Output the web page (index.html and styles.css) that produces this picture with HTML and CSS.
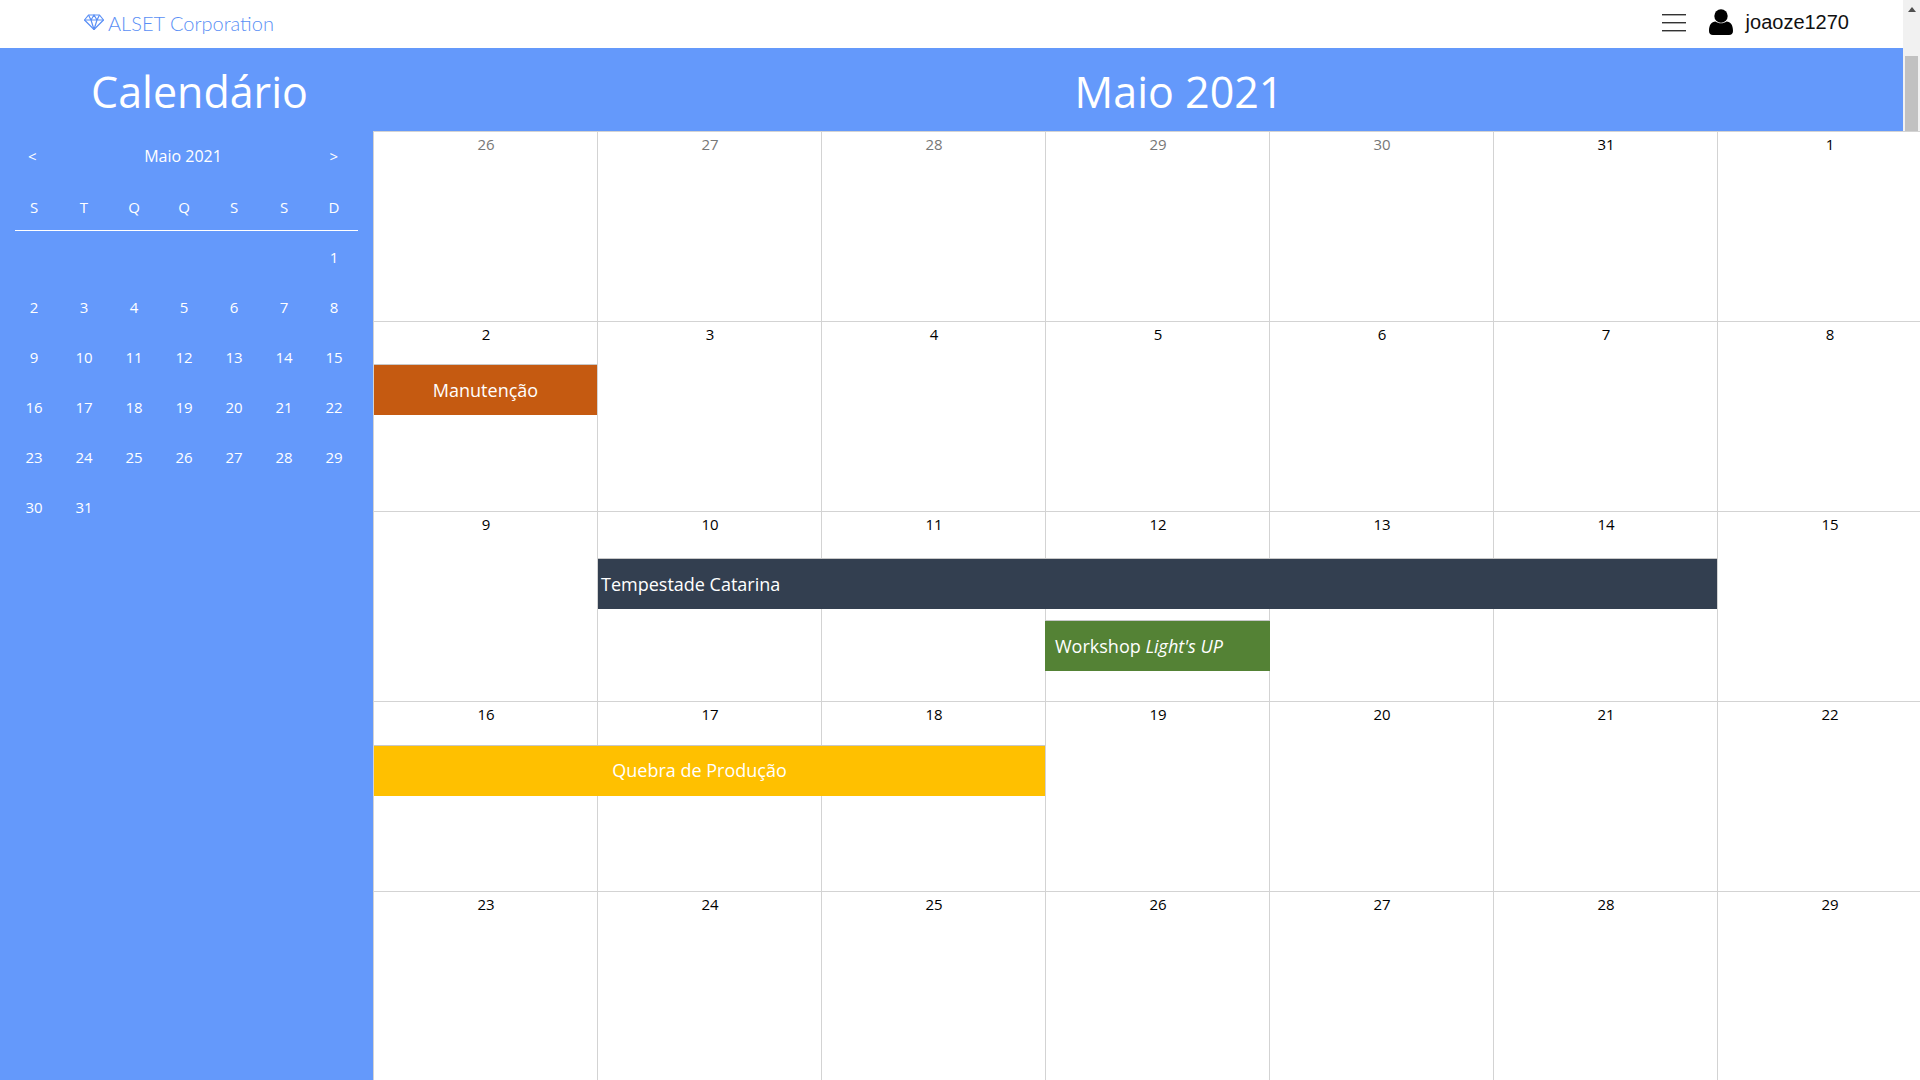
FILE: index.html
```html
<!DOCTYPE html>
<html lang="pt-BR">
  <head>
    <meta charset="UTF-8" />
    <title>Calendário</title>
    <link rel="stylesheet" href="styles.css">
  </head>
  <body>
    <nav class="navbar">
      <a class="brand">
        <svg class="brand-icon" viewBox="0 0 20 16" fill="none" stroke="currentColor" stroke-width="1.2" stroke-linejoin="round">
          <path d="M4.5 1h11l4 5-9.500 9.500L.5 6z" />
          <path d="M.5 6h19M4.500 1l2.500 5 3 9.500 3-9.500 2.500-5M7 6l3-5 3 5" />
        </svg>
        ALSET Corporation
      </a>
      <div class="nav-right">
        <div class="hamburger"><span></span><span></span><span></span></div>
        <svg class="user-icon" viewBox="0 0 24 26" fill="currentColor">
          <circle cx="12" cy="7" r="6.700" />
          <path d="M0 22c0-6 2.500-9.500 6.500-9.500 1.500 1.200 3.500 1.800 5.500 1.800s4-.6 5.500-1.800c4 0 6.500 3.500 6.500 9.500 0 2.500-1.500 4-4 4H4c-2.500 0-4-1.500-4-4z" />
        </svg>
        <span class="username">joaoze1270</span>
      </div>
    </nav>

    <div class="layout">
      <aside class="sidebar">
        <h2 class="sidebar-title">Calendário</h2>
        <div class="mini-head">
          <span>&lt;</span>
          <span class="mini-month">Maio 2021</span>
          <span>&gt;</span>
        </div>
        <div class="mini-week">
          <span>S</span><span>T</span><span>Q</span><span>Q</span><span>S</span><span>S</span><span>D</span>
        </div>
        <div class="mini-rule"></div>
        <div class="mini-days">
          <span></span><span></span><span></span><span></span><span></span><span></span><span>1</span>
          <span>2</span><span>3</span><span>4</span><span>5</span><span>6</span><span>7</span><span>8</span>
          <span>9</span><span>10</span><span>11</span><span>12</span><span>13</span><span>14</span><span>15</span>
          <span>16</span><span>17</span><span>18</span><span>19</span><span>20</span><span>21</span><span>22</span>
          <span>23</span><span>24</span><span>25</span><span>26</span><span>27</span><span>28</span><span>29</span>
          <span>30</span><span>31</span>
        </div>
      </aside>

      <main class="main">
        <header class="month-bar">Maio 2021</header>
        <div class="month-grid">
          <div class="day other">26</div><div class="day other">27</div><div class="day other">28</div><div class="day other">29</div><div class="day other">30</div><div class="day">31</div><div class="day">1</div>
          <div class="day">2
            <div class="event event-manutencao">Manutenção</div>
          </div>
          <div class="day">3</div><div class="day">4</div><div class="day">5</div><div class="day">6</div><div class="day">7</div><div class="day">8</div>
          <div class="day">9</div>
          <div class="day">10
            <div class="event event-tempestade">Tempestade Catarina</div>
          </div>
          <div class="day">11</div>
          <div class="day">12
            <div class="event event-workshop">Workshop&nbsp;<em>Light's UP</em></div>
          </div>
          <div class="day">13</div><div class="day">14</div><div class="day">15</div>
          <div class="day">16
            <div class="event event-quebra">Quebra de Produção</div>
          </div>
          <div class="day">17</div><div class="day">18</div><div class="day">19</div><div class="day">20</div><div class="day">21</div><div class="day">22</div>
          <div class="day">23</div><div class="day">24</div><div class="day">25</div><div class="day">26</div><div class="day">27</div><div class="day">28</div><div class="day">29</div>
        </div>
      </main>
    </div>

    <div class="scrollbar">
      <div class="scroll-arrow"></div>
      <div class="scroll-thumb"></div>
    </div>
  </body>
</html>
```

FILE: styles.css
```css
* {
  box-sizing: border-box;
}
html,
body {
  height: 100%;
}
body {
  margin: 0;
  overflow: hidden;
  font-family: "Open Sans", "Noto Sans", sans-serif;
  background-color: #ffffff;
}
.navbar {
  height: 48px;
  display: flex;
  justify-content: space-between;
  align-items: center;
  padding: 0 71px 0 84px;
}
.brand {
  display: flex;
  align-items: center;
  gap: 4px;
  margin-top: -2px;
  font-family: Lato, sans-serif;
  font-weight: 300;
  font-size: 20px;
  color: #5a8ff5;
}
.brand-icon {
  width: 20px;
  height: 16px;
  margin-top: -3px;
}
.nav-right {
  display: flex;
  align-items: center;
  margin-top: -4px;
}
.hamburger {
  width: 24px;
  display: flex;
  flex-direction: column;
  gap: 7px;
  margin-right: 23px;
}
.hamburger span {
  height: 1px;
  background-color: #333333;
  box-shadow: 0 1px 0 #aaaaaa;
}
.user-icon {
  width: 24px;
  height: 26px;
  color: #000000;
  margin-right: 13px;
}
.username {
  font-family: "Liberation Sans", Arial, sans-serif;
  font-size: 20px;
  color: #111111;
}
.layout {
  display: flex;
  height: 1032px;
}
.sidebar {
  width: 373px;
  flex-shrink: 0;
  background-color: #6499fb;
  color: #ffffff;
}
.sidebar-title {
  margin: 0;
  height: 83px;
  padding-left: 26px;
  text-align: center;
  font-weight: 400;
  font-size: 43px;
  line-height: 88px;
}
.mini-head {
  display: flex;
  justify-content: space-between;
  align-items: center;
  padding: 0 35px 0 28px;
  margin-top: 10px;
  height: 30px;
  font-size: 15px;
}
.mini-month {
  font-size: 16px;
}
.mini-week,
.mini-days {
  display: grid;
  grid-template-columns: repeat(7, 50px);
  margin-left: 9px;
  text-align: center;
  font-size: 15px;
  line-height: 50px;
}
.mini-week {
  margin-top: 11px;
  height: 48px;
}
.mini-rule {
  height: 1px;
  margin: 0 15px;
  background-color: #ffffff;
}
.mini-days {
  grid-auto-rows: 50px;
  padding-top: 1px;
}
.main {
  width: 1568px;
  flex-shrink: 0;
}
.month-bar {
  height: 83px;
  background-color: #6499fb;
  color: #ffffff;
  padding-left: 44px;
  text-align: center;
  font-size: 43px;
  line-height: 88px;
}
.month-grid {
  display: grid;
  grid-template-columns: repeat(7, 224px);
  grid-auto-rows: 190px;
}
.day {
  position: relative;
  border-left: 1px solid #d3d3d3;
  border-top: 1px solid #d3d3d3;
  padding-top: 2px;
  padding-left: 1px;
  text-align: center;
  font-size: 15px;
  line-height: 20px;
  color: #000000;
}
.day.other {
  color: #777777;
}
.event {
  position: absolute;
  z-index: 1;
  display: flex;
  align-items: center;
  height: 51px;
  border-top: 1px solid #c8c8c8;
  padding-bottom: 1px;
  font-size: 18px;
  line-height: 24px;
  color: #ffffff;
}
.event-manutencao {
  top: 42px;
  left: 0;
  width: 223px;
  justify-content: center;
  background-color: #c55a11;
}
.event-tempestade {
  top: 46px;
  left: 0;
  width: 1119px;
  padding-left: 3px;
  background-color: #333f50;
}
.event-workshop {
  top: 108px;
  left: -1px;
  width: 225px;
  padding-left: 10px;
  background-color: #548235;
}
.event-quebra {
  top: 43px;
  left: 0;
  width: 671px;
  padding-right: 20px;
  padding-bottom: 2px;
  justify-content: center;
  background-color: #ffc000;
}
.scrollbar {
  position: absolute;
  top: 0;
  right: 0;
  width: 17px;
  height: 131px;
  background-color: #f1f1f1;
}
.scroll-arrow {
  width: 0;
  height: 0;
  margin: 7px auto 0;
  border-left: 4px solid transparent;
  border-right: 4px solid transparent;
  border-bottom: 5px solid #505050;
}
.scroll-thumb {
  position: absolute;
  top: 56px;
  left: 2px;
  right: 2px;
  bottom: 0;
  background-color: #c1c1c1;
}
```
